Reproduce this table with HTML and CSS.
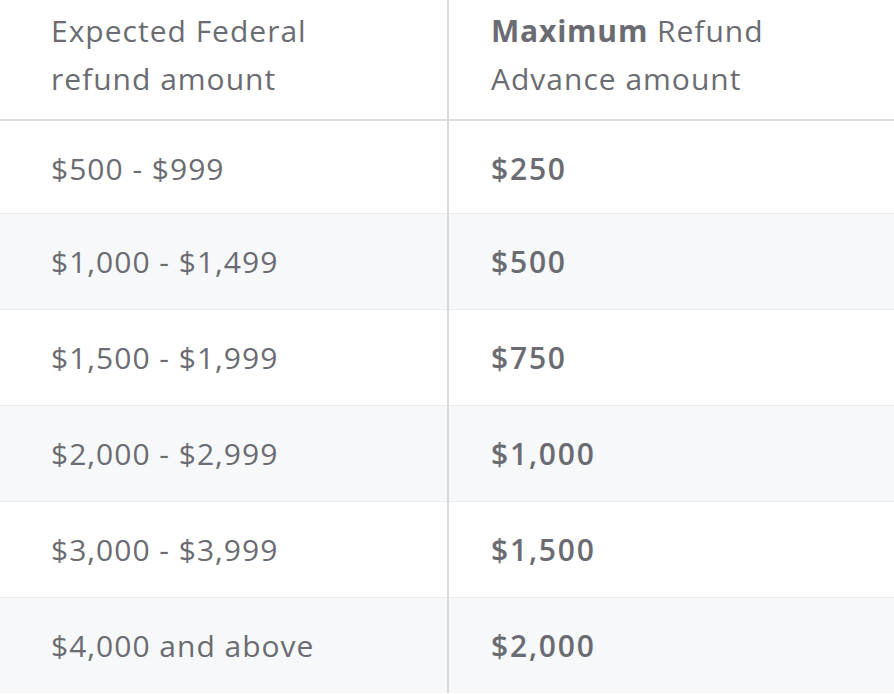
FILE: index.html
```html
<!DOCTYPE html>
<html lang="en">
<head>
<meta charset="utf-8">
<title>Refund Advance amounts</title>
<link rel="stylesheet" href="styles.css">
</head>
<body>
<table class="advance-table">
  <colgroup>
    <col class="col-left">
    <col class="col-right">
  </colgroup>
  <thead>
    <tr class="head-row">
      <th class="cell cell-left">Expected Federal<br>refund amount</th>
      <th class="cell cell-right"><strong class="strong">Maximum</strong> Refund<br>Advance amount</th>
    </tr>
  </thead>
  <tbody>
    <tr class="row first"><td class="cell cell-left">$500 - $999</td><td class="cell cell-right value">$250</td></tr>
    <tr class="row alt"><td class="cell cell-left">$1,000 - $1,499</td><td class="cell cell-right value">$500</td></tr>
    <tr class="row"><td class="cell cell-left">$1,500 - $1,999</td><td class="cell cell-right value">$750</td></tr>
    <tr class="row alt"><td class="cell cell-left">$2,000 - $2,999</td><td class="cell cell-right value">$1,000</td></tr>
    <tr class="row"><td class="cell cell-left">$3,000 - $3,999</td><td class="cell cell-right value">$1,500</td></tr>
    <tr class="row alt last"><td class="cell cell-left">$4,000 and above</td><td class="cell cell-right value">$2,000</td></tr>
  </tbody>
</table>
</body>
</html>
```
FILE: styles.css
```css
html, body {
  margin: 0;
  padding: 0;
  background: #ffffff;
}
body {
  font-family: "Open Sans", "Noto Sans", sans-serif;
  color: #6b6c72;
  font-size: 30px;
  overflow: hidden;
}
.advance-table {
  width: 894px;
  border-collapse: collapse;
  table-layout: fixed;
}
.col-left {
  width: 448px;
}
.cell {
  text-align: left;
  vertical-align: middle;
  font-weight: 400;
  padding: 0;
  box-sizing: border-box;
  letter-spacing: 1px;
}
.cell-left {
  padding-left: 51px;
  border-right: 2px solid #d9dadf;
}
.cell-right {
  padding-left: 42px;
}
.head-row .cell {
  height: 120px;
  line-height: 48px;
  padding-top: 0;
  padding-bottom: 10px;
  border-bottom: 2px solid #dcdde1;
}
.strong {
  font-weight: 700;
  letter-spacing: 0.8px;
}
.row .cell {
  height: 96px;
  padding-top: 0;
  border-bottom: 1px solid #ebecef;
}
.row.first .cell {
  height: 93px;
  padding-top: 4px;
}
.row.last .cell {
  border-bottom: none;
}
.row.alt {
  background: #f7f8fa;
}
.row .value {
  font-weight: 600;
  letter-spacing: 1.8px;
}
```
